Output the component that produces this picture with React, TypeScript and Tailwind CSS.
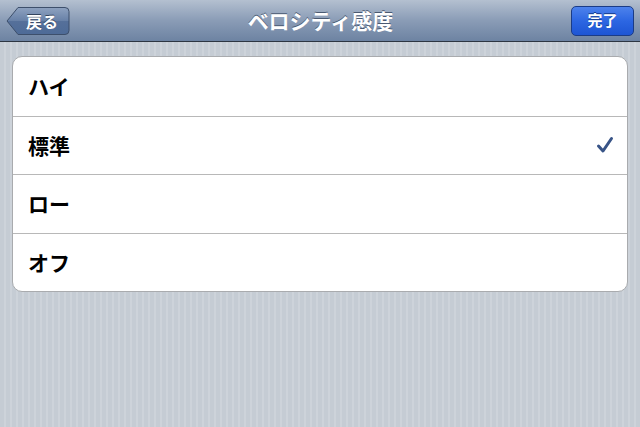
import React from 'react';

const rows = [
  { label: 'ハイ', checked: false },
  { label: '標準', checked: true },
  { label: 'ロー', checked: false },
  { label: 'オフ', checked: false },
];

const font = { fontFamily: '"Noto Sans CJK JP", "Noto Sans", sans-serif' };

const BackButton: React.FC = () => (
  <button className="relative h-[30px] w-[64px] text-white">
    <svg className="absolute inset-0" width="64" height="30" viewBox="0 0 64 30">
      <defs>
        <linearGradient id="back" x1="0" y1="0" x2="0" y2="1">
          <stop offset="0" stopColor="#8ea2c0" />
          <stop offset="0.5" stopColor="#6780a7" />
          <stop offset="0.5" stopColor="#55709a" />
          <stop offset="1" stopColor="#4e6b97" />
        </linearGradient>
      </defs>
      <path
        d="M1 15 L12 1.5 H59 Q63 1.5 63 5.5 V24.5 Q63 28.5 59 28.5 H12 Z"
        fill="url(#back)"
        stroke="#3d4f6b"
        strokeWidth="1"
      />
    </svg>
    <span className="relative pl-[8px] text-[16px] font-bold [text-shadow:0_-1px_0_#33445e]">戻る</span>
  </button>
);

export default function App() {
  return (
    <div
      className="h-[427px] w-[640px] overflow-hidden bg-[repeating-linear-gradient(90deg,#c5ccd4_0px,#c5ccd4_4px,#cdd3da_4px,#cdd3da_6px)]"
      style={font}
    >
      <header className="flex h-[42px] items-center justify-between border-b border-[#2d3642] bg-gradient-to-b from-[#b4c0d0] via-[#8a9cb6] to-[#6d83a2] px-[6px]">
        <BackButton />
        <h1 className="text-[21px] font-bold text-white [text-shadow:0_-1px_0_#4a5a72]">ベロシティ感度</h1>
        <button className="h-[30px] w-[63px] rounded-[5px] border border-[#1b3c86] bg-gradient-to-b from-[#4d82ec] via-[#2c66e2] to-[#1d55d4] text-[15px] font-bold text-white [text-shadow:0_-1px_0_#143a8c]">
          完了
        </button>
      </header>
      <main className="px-[12px] pt-[14px]">
        <ul className="overflow-hidden rounded-[10px] border border-[#a9abae] bg-white">
          {rows.map((row, i) => (
            <li
              key={row.label}
              className={`flex h-[58.5px] items-center justify-between pl-[15px] pr-[13px] ${i > 0 ? 'border-t border-[#b8b8b8]' : ''}`}
            >
              <span className="text-[21px] font-bold text-black">{row.label}</span>
              {row.checked && (
                <svg width="18" height="18" viewBox="0 0 18 18">
                  <path d="M2.5 10 L7 15 L15.5 2.5" fill="none" stroke="#385487" strokeWidth="3" strokeLinecap="round" strokeLinejoin="round" />
                </svg>
              )}
            </li>
          ))}
        </ul>
      </main>
    </div>
  );
}
